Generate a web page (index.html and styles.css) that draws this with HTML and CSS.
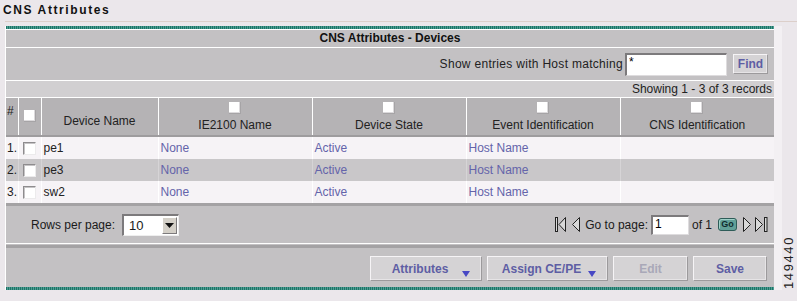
FILE: index.html
```html
<!DOCTYPE html>
<html lang="en">
<head>
  <meta charset="UTF-8">
  <meta name="viewport" content="width=device-width, initial-scale=1.0">
  <title>CNS Attributes</title>
  <link rel="stylesheet" href="styles.css">
</head>
<body>

  <div class="page-title">CNS Attributes</div>
  <div class="title-rule"></div>

  <div class="wrap">
    <div class="panel">
      <div class="teal"></div>
      <div class="caption">CNS Attributes - Devices</div>

      <div class="filter">
        <span class="filter-label">Show entries with Host matching</span>
        <input type="text" class="field host" value="*">
        <button class="btn find">Find</button>
      </div>

      <div class="showing">Showing 1 - 3 of 3 records</div>

      <table class="grid">
        <colgroup>
          <col style="width:12px">
          <col style="width:23px">
          <col style="width:117px">
          <col style="width:154px">
          <col style="width:154px">
          <col style="width:154px">
          <col style="width:154px">
        </colgroup>
        <thead>
          <tr>
            <th class="num">#</th>
            <th class="sel"><span class="cb head"></span></th>
            <th class="name">Device Name</th>
            <th><span class="cb head"></span>IE2100 Name</th>
            <th><span class="cb head"></span>Device State</th>
            <th><span class="cb head"></span>Event Identification</th>
            <th><span class="cb head"></span>CNS Identification</th>
          </tr>
        </thead>
        <tbody>
          <tr>
            <td>1.</td>
            <td class="sel"><span class="cb"></span></td>
            <td>pe1</td>
            <td class="link">None</td>
            <td class="link">Active</td>
            <td class="link">Host Name</td>
            <td></td>
          </tr>
          <tr class="alt">
            <td>2.</td>
            <td class="sel"><span class="cb"></span></td>
            <td>pe3</td>
            <td class="link">None</td>
            <td class="link">Active</td>
            <td class="link">Host Name</td>
            <td></td>
          </tr>
          <tr>
            <td>3.</td>
            <td class="sel"><span class="cb"></span></td>
            <td>sw2</td>
            <td class="link">None</td>
            <td class="link">Active</td>
            <td class="link">Host Name</td>
            <td></td>
          </tr>
        </tbody>
      </table>

      <div class="thick"></div>

      <div class="pager">
        <div class="rows">
          <span>Rows per page:</span>
          <div class="select">
            <span>10</span>
            <span class="arrow">
              <svg width="9" height="5" viewBox="0 0 9 5"><path d="M0 0h9L4.5 5z" fill="#111"/></svg>
            </span>
          </div>
        </div>
        <div class="nav">
          <svg class="first" width="11" height="15" viewBox="0 0 11 15">
            <rect x="0.5" y="0.5" width="2" height="14" fill="#d8d8d8" stroke="#222"/>
            <path d="M10.5 0.5L4 7.5L10.5 14.5Z" fill="#d8d8d8" stroke="#222"/>
          </svg>
          <svg class="prev" width="8" height="15" viewBox="0 0 8 15">
            <path d="M7.5 0.5L0.5 7.5L7.5 14.5Z" fill="#d8d8d8" stroke="#222"/>
          </svg>
          <span class="goto">Go to page:</span>
          <input type="text" class="field page" value="1">
          <span class="of">of 1</span>
          <span class="go">Go</span>
          <svg class="next" width="8" height="15" viewBox="0 0 8 15">
            <path d="M0.5 0.5L7.5 7.5L0.5 14.5Z" fill="#d8d8d8" stroke="#222"/>
          </svg>
          <svg class="last" width="13" height="15" viewBox="0 0 13 15">
            <path d="M0.5 0.5L7.5 7.5L0.5 14.5Z" fill="#d8d8d8" stroke="#222"/>
            <rect x="9.5" y="0.5" width="2.5" height="14" fill="#d8d8d8" stroke="#222"/>
          </svg>
        </div>
      </div>

      <div class="split"></div>

      <div class="actions">
        <button class="btn wide attrs">Attributes<span class="drop"></span></button>
        <button class="btn wide assign">Assign CE/PE<span class="drop"></span></button>
        <button class="btn edit" disabled>Edit</button>
        <button class="btn save">Save</button>
      </div>

      <div class="teal"></div>
    </div>
    <div class="strip"></div>
  </div>

  <div class="fig-id">149440</div>

</body>
</html>
```

FILE: styles.css
```css
body {
  margin: 0;
  width: 797px;
  height: 301px;
  overflow: hidden;
  position: relative;
  background: #ebe7eb;
  font-family: "Liberation Sans", Arial, sans-serif;
  font-size: 12px;
  color: #1a1a1a;
}

.page-title {
  height: 21px;
  padding: 3px 0 0 3px;
  box-sizing: border-box;
  line-height: 15px;
  font-weight: bold;
  letter-spacing: 1.6px;
  color: #111;
}

.title-rule {
  height: 1px;
  margin-left: 5px;
  background: #dccfca;
}

.wrap {
  display: flex;
  margin: 4px 0 0 5px;
}

.panel {
  width: 768px;
  border-left: 1px solid #fff;
  background: #c3c1c3;
}

.strip {
  width: 8px;
  background: #f3f0f3;
}

.teal {
  height: 3px;
  background: repeating-linear-gradient(to right, #1e7468 0, #1e7468 1px, #4c9e92 1px, #4c9e92 2px);
}

.caption {
  height: 17px;
  line-height: 17px;
  border-top: 1px solid #fff;
  border-bottom: 1px solid #fff;
  text-align: center;
  font-weight: bold;
  color: #111;
}

.filter {
  height: 32px;
  display: flex;
  align-items: center;
  justify-content: flex-end;
  padding-right: 6px;
  border-bottom: 1px solid #fff;
  color: #222;
}

.filter-label {
  letter-spacing: 0.3px;
}

.field {
  box-sizing: border-box;
  margin: 0;
  padding: 0 0 0 2px;
  font-family: "Liberation Sans", Arial, sans-serif;
  font-size: 12px;
  background: #fff;
  border-top: 2px solid #7c7a7c;
  border-left: 2px solid #7c7a7c;
  border-right: 1px solid #dedcde;
  border-bottom: 1px solid #dedcde;
  outline: none;
}

.host {
  width: 102px;
  height: 23px;
  margin-left: 2px;
  padding-bottom: 6px;
}

.btn {
  box-sizing: border-box;
  margin: 0;
  padding: 0;
  font-family: "Liberation Sans", Arial, sans-serif;
  font-size: 12px;
  font-weight: bold;
  color: #5e5ea4;
  background: #d5d3d5;
  border-top: 1px solid #f6f4f6;
  border-left: 1px solid #f6f4f6;
  border-right: 1px solid #9c9a9c;
  border-bottom: 1px solid #9c9a9c;
  box-shadow: inset -1px -1px 0 #e6e4e6;
}

.find {
  width: 35px;
  height: 20px;
  margin-left: 6px;
}

.showing {
  height: 16px;
  line-height: 16px;
  padding-right: 2px;
  text-align: right;
  background: #d1cfd1;
  border-bottom: 1px solid #fff;
  color: #222;
}

.grid {
  width: 768px;
  table-layout: fixed;
  border-collapse: collapse;
}

.grid thead tr {
  height: 38px;
}

.grid th {
  padding: 0 0 3px;
  background: #b5b3b5;
  border-left: 1px solid #fff;
  border-bottom: 2px solid #9e9c9e;
  vertical-align: bottom;
  font-weight: normal;
  color: #222;
  line-height: 14px;
}

.grid th:first-child,
.grid td:first-child {
  border-left: none;
}

.grid th.num {
  vertical-align: top;
  padding: 6px 0 0 1px;
  text-align: left;
}

.grid th.sel {
  vertical-align: middle;
  padding: 2px 0 0;
}

.grid th.name {
  padding-bottom: 7px;
}

.grid td {
  height: 22px;
  padding: 0 0 0 2px;
  background: #f6f3f6;
  border-left: 1px solid #fff;
  white-space: nowrap;
  color: #222;
}

.grid td:first-child {
  padding-left: 1px;
}

.grid tr.alt td {
  background: #c9c7c9;
  border-left-color: #d6d4d6;
}

.grid td.sel {
  padding: 0;
  text-align: center;
}

.grid td.link {
  color: #6464aa;
}

.cb {
  display: block;
  box-sizing: border-box;
  width: 13px;
  height: 13px;
  margin: 0 auto;
  background: #fff;
  border-top: 1px solid #8e8c8e;
  border-left: 1px solid #8e8c8e;
  border-right: 1px solid #ecebec;
  border-bottom: 1px solid #ecebec;
  box-shadow: inset 1px 1px 0 #c6c4c6;
}

.cb.head {
  width: 12px;
  height: 12px;
  margin-bottom: 4px;
  border: none;
  border-right: 1px solid #a6a4a6;
  border-bottom: 1px solid #a6a4a6;
  box-shadow: inset -1px -1px 0 #dcdadc;
}

.thick {
  height: 3px;
  background: #a4a2a4;
}

.pager {
  height: 37px;
  display: flex;
  align-items: center;
  justify-content: space-between;
  padding: 0 6px 0 25px;
  color: #1a1a1a;
}

.rows {
  display: flex;
  align-items: center;
}

.select {
  display: flex;
  align-items: center;
  justify-content: space-between;
  box-sizing: border-box;
  width: 57px;
  height: 22px;
  margin-left: 7px;
  padding-left: 5px;
  background: #fff;
  border-top: 2px solid #7c7a7c;
  border-left: 2px solid #7c7a7c;
  border-right: 1px solid #eeeeee;
  border-bottom: 1px solid #eeeeee;
  font-size: 13px;
}

.arrow {
  display: flex;
  align-items: center;
  justify-content: center;
  box-sizing: border-box;
  width: 15px;
  height: 17px;
  margin-right: 1px;
  background: #d4d0c8;
  border-top: 1px solid #fff;
  border-left: 1px solid #fff;
  border-right: 1px solid #7c7a7c;
  border-bottom: 1px solid #7c7a7c;
}

.nav {
  display: flex;
  align-items: center;
}

.nav svg {
  display: block;
}

.prev {
  margin-left: 6px;
}

.goto {
  margin-left: 5px;
}

.page {
  width: 38px;
  height: 20px;
  margin-left: 3px;
  padding-bottom: 3px;
}

.of {
  margin-left: 3px;
}

.go {
  box-sizing: border-box;
  width: 19px;
  height: 13px;
  margin-left: 6px;
  line-height: 11px;
  text-align: center;
  font-size: 9px;
  font-weight: bold;
  color: #0f2c2e;
  background: #62a098;
  border: 1px solid #2e5c58;
  border-radius: 3px;
  box-shadow: inset 1px 1px 0 #9fd0c8;
}

.next {
  margin-left: 6px;
}

.last {
  margin-left: 4px;
}

.split {
  height: 1px;
  border-top: 1px solid #fff;
  border-bottom: 3px solid #a4a2a4;
}

.actions {
  height: 39px;
  display: flex;
  align-items: center;
  justify-content: flex-end;
  gap: 5px;
  padding: 2px 7px 0 0;
  box-sizing: border-box;
}

.actions .btn {
  height: 25px;
  position: relative;
}

.attrs {
  width: 112px;
  padding-right: 12px;
}

.assign {
  width: 121px;
  padding-right: 12px;
}

.edit {
  width: 75px;
  color: #a9a8b8;
}

.save {
  width: 74px;
}

.drop {
  position: absolute;
  right: 11px;
  bottom: 3px;
  width: 0;
  height: 0;
  border-left: 4px solid transparent;
  border-right: 4px solid transparent;
  border-top: 6px solid #4848c4;
}

.fig-id {
  position: absolute;
  left: 782px;
  top: 236px;
  writing-mode: vertical-rl;
  transform: rotate(180deg);
  font-size: 13px;
  line-height: 14px;
  letter-spacing: 1.6px;
  color: #222;
}
```
